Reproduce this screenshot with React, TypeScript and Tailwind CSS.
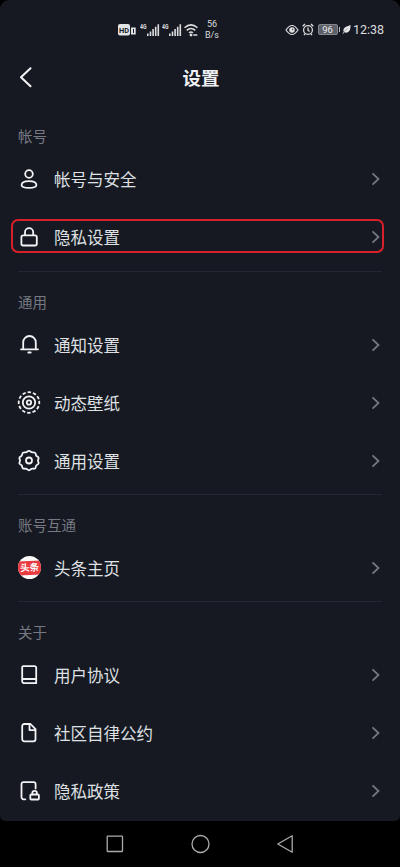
import React from "react";

const iconProps = {
  width: 24,
  height: 24,
  viewBox: "0 0 24 24",
  fill: "none",
  stroke: "#f2f3f5",
  strokeWidth: 1.8,
  strokeLinecap: "round" as const,
  strokeLinejoin: "round" as const,
};

const UserIcon = () => (
  <svg {...iconProps}>
    <circle cx="12" cy="7" r="3.8" />
    <path d="M12 14.1c-4.6 0-7.4 1.400-7.4 3.800 0 2 2.500 2.900 7.400 2.900s7.400-.9 7.400-2.900c0-2.400-2.800-3.800-7.400-3.800Z" />
  </svg>
);

const LockIcon = () => (
  <svg {...iconProps}>
    <rect x="4.400" y="10.300" width="15.400" height="10.200" rx="1.800" />
    <path d="M8 10.200V7.300a4.100 4.100 0 0 1 8.200 0v2.900" />
  </svg>
);

const BellIcon = () => (
  <svg {...iconProps}>
    <path d="M4 16.300h17M6.200 16.100V9.300a6.300 6.300 0 0 1 12.600 0v6.800" />
    <path d="M11.400 19.600h2.200" strokeWidth="2" />
  </svg>
);

const WallpaperIcon = () => (
  <svg {...iconProps}>
    <circle cx="12" cy="11.500" r="10.300" strokeDasharray="3.400 1.993" strokeLinecap="butt" transform="rotate(-9.500 12 11.500)" />
    <circle cx="12" cy="11.500" r="6.200" />
    <circle cx="12" cy="11.500" r="2.200" />
  </svg>
);

const GearIcon = () => (
  <svg {...iconProps}>
    <path d="M10.300 2.700q1.700-1.700 3.400 0 .9 1 2.200.7 2.700-.4 2.900 1.900.1 1.500 1.300 2.100 2.200 1 1.200 2.900-.7 1.300 0 2.500 1 1.900-1.200 2.900-1.200.6-1.300 2.100-.2 2.300-2.900 1.900-1.300-.3-2.200.7-1.700 1.700-3.400 0-.9-1-2.200-.7-2.700.4-2.900-1.900-.1-1.500-1.300-2.100-2.200-1-1.200-2.900.7-1.200 0-2.500-1-1.900 1.200-2.900 1.200-.6 1.300-2.100.2-2.300 2.900-1.900 1.300.3 2.200-.7Z" />
    <circle cx="12" cy="11.500" r="3" />
  </svg>
);

const BookIcon = () => (
  <svg {...iconProps}>
    <path d="M6.200 3.200h11.500a1.500 1.500 0 0 1 1.500 1.500v15.500H7.200a2 2 0 0 1-2-2V4.200a1 1 0 0 1 1-1ZM5.400 16h13.800" />
  </svg>
);

const FileIcon = () => (
  <svg {...iconProps}>
    <path d="M7.200 3h6.300l5 5.200v10.100a2 2 0 0 1-2 2H7.200a2 2 0 0 1-2-2V5a2 2 0 0 1 2-2Z" />
    <path d="M12.500 3.600v5.500h5.700" />
  </svg>
);

const PolicyIcon = () => (
  <svg {...iconProps}>
    <path d="M8.300 20.300H6.500a2 2 0 0 1-2-2V5.100a2 2 0 0 1 2-2h10.300a1.800 1.800 0 0 1 1.800 1.800v4.600" />
    <rect x="13.300" y="15.500" width="8.600" height="5" rx="1" />
    <path d="M15.300 15.300v-1.100a2.300 2.300 0 0 1 4.600 0v1.100" />
  </svg>
);

const ToutiaoIcon = () => (
  <span className="flex h-6 w-6 items-center justify-center">
    <span className="mb-px flex h-[23px] w-[23px] items-center justify-center overflow-hidden rounded-full bg-[#fafafa]">
      <span className="flex h-[14px] w-[25px] shrink-0 -rotate-3 items-center justify-center bg-[#e93a40] text-[9.5px] font-bold leading-none whitespace-nowrap text-white">
        头条
      </span>
    </span>
  </span>
);

type Item = { label: string; icon: () => React.ReactElement; highlighted?: boolean };

const sections: { title: string; items: Item[] }[] = [
  {
    title: "帐号",
    items: [
      { label: "帐号与安全", icon: UserIcon },
      { label: "隐私设置", icon: LockIcon, highlighted: true },
    ],
  },
  {
    title: "通用",
    items: [
      { label: "通知设置", icon: BellIcon },
      { label: "动态壁纸", icon: WallpaperIcon },
      { label: "通用设置", icon: GearIcon },
    ],
  },
  { title: "账号互通", items: [{ label: "头条主页", icon: ToutiaoIcon }] },
  {
    title: "关于",
    items: [
      { label: "用户协议", icon: BookIcon },
      { label: "社区自律公约", icon: FileIcon },
      { label: "隐私政策", icon: PolicyIcon },
    ],
  },
];

const Row = ({ label, icon: Icon, highlighted }: Item) => (
  <li className="relative flex h-[58px] items-center pr-[19px] pl-[17px]">
    <Icon />
    <span className="ml-[13px] flex-1 pt-1 text-[16.5px] leading-6 text-[#dfe0e3]">{label}</span>
    <svg width="10" height="14" viewBox="0 0 10 14" fill="none" stroke="#757880" strokeWidth="1.8">
      <path d="M1.500 1.300 7.500 7l-6 5.700" />
    </svg>
    {highlighted && (
      <span className="absolute top-[11px] right-[16px] left-[11px] h-[34px] rounded-[7px] border-2 border-[#d91f2a]" />
    )}
  </li>
);

const Signal = () => (
  <svg width="20" height="14" viewBox="0 0 20 14" fill="#dcdddf">
    <text x="0" y="5.500" fontSize="6.500" fontWeight="700" textLength="6.500" lengthAdjust="spacingAndGlyphs">4G</text>
    <path d="M7 10.500h1.600V13H7zM9.700 8.500h1.600V13H9.700zM12.300 6h1.600v7h-1.600zM14.900 3.700h1.600V13h-1.600zM17.500 1.200h1.600V13h-1.600z" />
  </svg>
);

const StatusBar = () => (
  <div className="flex h-[59px] items-center pr-4 pl-[118px] text-[#dcdddf]">
    <svg width="19" height="12" viewBox="0 0 19 12" fill="#e2e3e5">
      <rect width="12" height="11.500" rx="2" />
      <text x="1" y="8.800" fontSize="8" fontWeight="700" fill="#171a23" textLength="10" lengthAdjust="spacingAndGlyphs">HD</text>
      <path fillRule="evenodd" d="M13 3.500h4.700v7H13zM15 5v4h1V5z" />
    </svg>
    <span className="ml-[3px] flex gap-[2px]"><Signal /><Signal /></span>
    <svg className="ml-[2px]" width="17" height="14" viewBox="0 0 17 14" fill="none" stroke="#dcdddf" strokeWidth="1.500">
      <path d="M.5 4.700Q7-1 13.500 4.700M2.700 7.300q4.300-3.600 8.600 0M5 9.800q2-1.700 4 0" />
      <circle cx="7" cy="12" r=".7" fill="#dcdddf" />
      <path d="M9.300 12h4" />
    </svg>
    <span className="ml-[3px] flex w-[16px] flex-col items-center text-[9px] leading-[10.500px]">
      <span>56</span>
      <span>B/s</span>
    </span>
    <span className="flex-1" />
    <svg width="14" height="12" viewBox="0 0 14 12" fill="none" stroke="#dcdddf" strokeWidth="1.200">
      <path d="M1 6q6-9 12 0-6 9-12 0Z" />
      <circle cx="7" cy="6" r="2.200" fill="#dcdddf" />
      <circle cx="7.700" cy="5.300" r=".6" fill="#171a23" stroke="none" />
    </svg>
    <svg className="ml-[3px]" width="12" height="13" viewBox="0 0 12 13" fill="none" stroke="#dcdddf" strokeWidth="1.300">
      <circle cx="6" cy="7" r="4.400" />
      <path d="M6 4.500v2.700l1.600 1.200M.7 3.300 3 1M11.300 3.300 9 1M3 10.800l-1 1.400M9 10.800l1 1.400" />
    </svg>
    <span className="ml-[4px] flex h-[11px] w-[20px] items-center justify-center rounded-[2px] border border-[#85878d] bg-[#5d6068] text-[9.500px] leading-none text-[#e8e8ea]">96</span>
    <span className="ml-px h-[5px] w-[1.500px] bg-[#b8babd]" />
    <svg className="ml-[2px]" width="9" height="11" viewBox="0 0 10 11" fill="#e6e7e9">
      <path d="M9.500.5Q9.700 9 4.300 9q-1 0-1.700-.5L1 10.500l-.5-.4L2 8Q-.5 3.500 9.500.5Z" />
      <path d="M2 8 6.500 4" stroke="#70737a" strokeWidth=".5" />
    </svg>
    <span className="ml-[2px] w-[31px] text-[12.500px] leading-4 whitespace-nowrap">12:38</span>
  </div>
);

export default function App() {
  return (
    <div className="flex h-[867px] w-[400px] flex-col overflow-hidden bg-black font-['Roboto','Noto_Sans_CJK_SC',sans-serif]">
      <main className="flex h-[821px] shrink-0 flex-col rounded-t-[9px] rounded-b-[5px] bg-[#161922]">
        <StatusBar />
        <header className="flex h-[37px] items-center pr-[19px] pl-[19px]">
          <svg width="14" height="22" viewBox="0 0 14 22" fill="none" stroke="#f2f3f5" strokeWidth="2" strokeLinecap="round" strokeLinejoin="round">
            <path d="M11.500 1.200 2 10.300l9.500 9" />
          </svg>
          <h1 className="flex-1 pt-[2px] pr-[12px] text-center text-[18.500px] leading-6 font-bold text-[#f0f1f3]">设置</h1>
        </header>
        <div className="flex flex-col pt-[10px]">
          {sections.map((section, i) => (
            <section key={section.title}>
              {i > 0 && <div className="mx-[18px] h-px bg-[#242731]" />}
              <h2 className="pt-[22px] pb-[2px] pl-[18px] text-[14.500px] leading-5 text-[#777a82]">{section.title}</h2>
              <ul className={i === 0 ? "pb-[5px]" : i < sections.length - 1 ? "pb-1" : ""}>
                {section.items.map((item) => (
                  <Row key={item.label} {...item} />
                ))}
              </ul>
            </section>
          ))}
        </div>
      </main>
      <nav className="flex h-[46px] items-center justify-between pr-[106px] pl-[106px]">
        <svg width="18" height="18" viewBox="0 0 18 18" fill="none" stroke="#aaa" strokeWidth="1.300">
          <rect x="1.200" y="1.200" width="15.300" height="15.300" rx=".5" />
        </svg>
        <svg width="20" height="20" viewBox="0 0 20 20" fill="none" stroke="#aaa" strokeWidth="1.300">
          <circle cx="10.500" cy="10" r="8.500" />
        </svg>
        <svg width="18" height="20" viewBox="0 0 18 20" fill="none" stroke="#aaa" strokeWidth="1.300" strokeLinejoin="round">
          <path d="M16.200 1.800v16.400L1.800 10Z" />
        </svg>
      </nav>
    </div>
  );
}
